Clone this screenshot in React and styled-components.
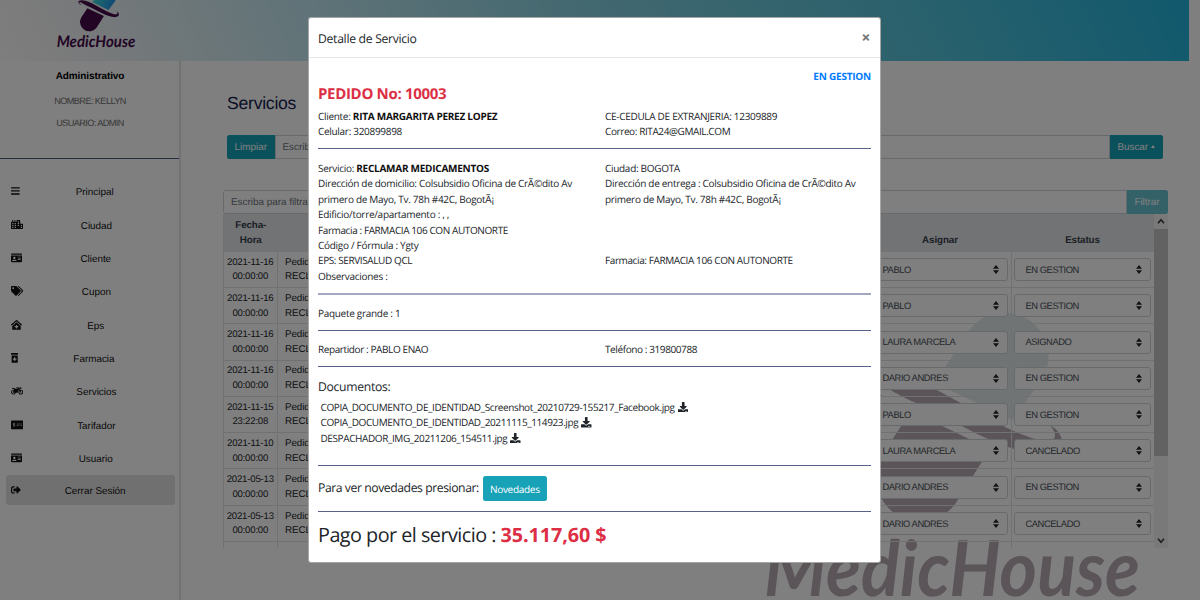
import React from "react";
import styled, { createGlobalStyle } from "styled-components";
import {
  FaBars, FaCity, FaIdCard, FaTags, FaClinicMedical, FaPrescriptionBottleAlt,
  FaMotorcycle, FaMoneyCheckAlt, FaSignOutAlt, FaDownload,
} from "react-icons/fa";

const Global = createGlobalStyle`
  *, *::before, *::after { box-sizing: border-box; }
  body {
    margin: 0;
    background: #fff;
    font-family: "Liberation Sans", Arial, sans-serif;
    font-size: 9.9px;
    color: #212529;
    overflow: hidden;
    text-rendering: geometricPrecision;
  }
`;

const Page = styled.div`
  position: relative;
  width: 1200px;
  height: 600px;
  overflow: hidden;
  background: #fff;
`;

const Banner = styled.header`
  width: 1189px;
  height: 61px;
  padding-left: 56px;
  background: linear-gradient(65deg, #fffcfc 0%, #f0f3f5 8%, #bee6f0 28%, #84d0e0 51%, #58c4da 75%, #22b2da 100%);
`;

const BannerLogo = styled.svg`
  display: block;
  width: 82px;
  height: 54px;
`;

const Columns = styled.div`
  display: flex;
  height: 539px;
`;

const Sidebar = styled.aside`
  width: 181px;
  border-right: 2px solid #e2e2e2;
  display: flex;
  flex-direction: column;
`;

const Profile = styled.div`
  height: 98px;
  padding-top: 8px;
  border-bottom: 1px solid #465a80;
  text-align: center;
`;

const Role = styled.div`
  font-size: 10px;
  line-height: 15px;
  font-weight: bold;
  color: #000;
  letter-spacing: -0.1px;
  padding-left: 1px;
`;

const ProfileLine = styled.div`
  margin-top: 10px;
  padding-left: 1px;
  font-size: 9.2px;
  line-height: 12px;
  letter-spacing: -0.6px;
  color: #707070;

  ${Role} + & { margin-top: 11px; }
`;

const Menu = styled.nav`
  display: flex;
  flex-direction: column;
  padding: 16px 0 0 6px;
`;

const MenuItem = styled.div`
  display: flex;
  align-items: center;
  width: 168.5px;
  height: ${(p) => (p.$active ? 30 : 33.37)}px;
  padding: 0 5px 0 5px;
  border-radius: 3px;
  background: ${(p) => (p.$active ? "#e1e1e1" : "transparent")};
  color: #101010;

  svg {
    display: block;
    flex: none;
    height: 9.8px;
    width: ${(p) => p.$icon}px;
    margin-top: -1px;
  }
  span { flex: 1; text-align: center; padding-top: ${(p) => (p.$active ? 3 : 2)}px; }
`;

const Main = styled.main`
  position: relative;
  flex: 1;
  padding: 30px 32px 0 42px;
`;

const Watermark = styled.svg`
  position: absolute;
  left: 579px;
  top: 239px;
  width: 400px;
  height: 300px;
`;

const Content = styled.div`
  position: relative;
`;

const Title = styled.h1`
  margin: 0 0 0 4px;
  height: 43.5px;
  font-size: 17.6px;
  line-height: 24px;
  font-weight: normal;
  letter-spacing: -0.25px;
  color: #14204f;
`;

const InputGroup = styled.div`
  display: flex;
  width: ${(p) => p.$width}px;
  height: 24.5px;
  margin: ${(p) => p.$margin};
  border-radius: 2.5px;
  overflow: hidden;
`;

const Field = styled.div`
  flex: 1;
  padding: 0 7px;
  border: 1px solid #ced4da;
  background: #fff;
  color: #6c757d;
  line-height: 24px;
  border-radius: ${(p) => (p.$first ? "2.5px 0 0 2.5px" : 0)};
`;

const Button = styled.div`
  display: flex;
  align-items: center;
  justify-content: center;
  gap: 3px;
  width: ${(p) => p.$width}px;
  padding-top: 1.5px;
  background: #17a2b8;
  color: #fff;
  opacity: ${(p) => (p.$disabled ? 0.65 : 1)};
`;

const CaretUp = styled.i`
  border: 2.6px solid transparent;
  border-top: 0;
  border-bottom: 3px solid #fff;
  margin-top: -2px;
`;

const Scroller = styled.div`
  display: flex;
  width: 944.5px;
  height: 333.5px;
  overflow: hidden;
`;

const Grid = styled.div`
  width: 930.5px;
  border-left: 1px solid #dee2e6;
`;

const GridRow = styled.div`
  display: grid;
  grid-template-columns: 53.5px 591px 143px 1fr;
  height: ${(p) => (p.$head ? 37.9 : 36.27)}px;
  background: ${(p) => (p.$head ? "#e3e7eb" : "transparent")};
  color: ${(p) => (p.$head ? "#39404a" : "#212529")};
  font-weight: ${(p) => (p.$head ? "bold" : "normal")};
  line-height: 14.7px;
`;

const Cell = styled.div`
  display: flex;
  flex-direction: column;
  justify-content: center;
  align-items: ${(p) => (p.$left ? "flex-start" : "center")};
  padding: ${(p) => (p.$left ? "1.7px 7.5px 0" : p.$low ? "16.5px 0 0" : p.$text ? "1.7px 1px 0" : "0 1px")};
  border-right: ${(p) => (p.$ruled ? "1px solid #dee2e6" : "0")};
  border-bottom: ${(p) => (p.$head ? "0" : "1px solid #dee2e6")};
  font-size: ${(p) => (p.$date ? 9.6 : 9.8)}px;
  letter-spacing: ${(p) => (p.$date ? -0.2 : -0.1)}px;
  white-space: nowrap;
`;

const Select = styled.div`
  display: flex;
  align-items: center;
  justify-content: space-between;
  width: 137px;
  height: 23px;
  padding: 0 8px 0 10.5px;
  border: 1px solid #ced4da;
  border-radius: 3px;
  background: #fff;
  color: #495057;
  font-size: 9.4px;
  letter-spacing: -0.45px;
  span { padding-top: 1px; }
  svg { width: 6px; height: 9px; fill: #212529; }
`;

const ScrollTrack = styled.div`
  display: flex;
  flex-direction: column;
  align-items: center;
  width: 14px;
  background: #f3f3f3;
  svg { width: 8px; height: 14.5px; stroke: #404040; stroke-width: 1.7; fill: none; flex: none; }
`;

const Thumb = styled.div`
  width: 14px;
  height: 227px;
  margin-bottom: auto;
  background: #c4c4c4;
`;

const Backdrop = styled.div`
  position: absolute;
  inset: 0;
  background: rgba(0, 0, 0, 0.5);
`;

const Modal = styled.section`
  width: 573px;
  height: 546px;
  margin: 17px 0 0 308px;
  border: 1px solid rgba(0, 0, 0, 0.35);
  border-radius: 3px;
  background: #fff;
  font-family: "Open Sans", "Noto Sans", sans-serif;
  font-size: 10px;
  line-height: 15.43px;
  letter-spacing: -0.3px;
  color: #212529;
`;

const ModalHeader = styled.div`
  display: flex;
  justify-content: space-between;
  height: 40px;
  padding: 10px 10px 0 9px;
  border-bottom: 1px solid #e6e9ec;
`;

const Heading = styled.div`
  font-size: 12.2px;
  line-height: ${(p) => p.$line || 22}px;
  letter-spacing: ${(p) => (p.$tight ? -0.43 : -0.3)}px;
`;

const Close = styled.div`
  font-size: 15.5px;
  line-height: 19px;
  font-weight: bold;
  color: #777;
`;

const ModalBody = styled.div`
  padding: 11px 9px 0;
`;

const Status = styled.div`
  text-align: right;
  font-size: 10px;
  line-height: 15px;
  font-weight: bold;
  letter-spacing: -0.22px;
  color: #007bff;
`;

const OrderNumber = styled.div`
  height: 24.7px;
  font-size: 15px;
  line-height: 20px;
  font-weight: bold;
  letter-spacing: -0.32px;
  color: #dc2f45;
`;

const Pair = styled.div`
  display: grid;
  grid-template-columns: 287px 1fr;
  white-space: nowrap;
  b { color: #101010; letter-spacing: -0.26px; }
`;

const Caps = styled.span`
  letter-spacing: -0.4px;
`;

const Rule = styled.hr`
  height: ${(p) => (p.$soft ? 2 : 1)}px;
  margin: ${(p) => p.$margin};
  border: 0;
  background: ${(p) => (p.$soft ? "#a3a8c0" : "#56618a")};
`;

const Files = styled.div`
  padding: 3px 0 0 2.5px;
  letter-spacing: -0.4px;
`;

const FileLine = styled.div`
  display: flex;
  align-items: center;
  gap: 3px;
  height: 15.43px;
  svg { width: 10.5px; height: 10.5px; margin-top: -1px; }
`;

const News = styled.div`
  display: flex;
  align-items: flex-start;
  gap: 4px;
  height: 25px;
`;

const NewsButton = styled.div`
  width: 64px;
  height: 25px;
  border-radius: 2.5px;
  background: #17a2b8;
  color: #fff;
  text-align: center;
  line-height: 26px;
`;

const Total = styled.div`
  font-size: 19.8px;
  line-height: 28px;
  letter-spacing: -0.52px;
  b { color: #dc2f45; letter-spacing: -0.08px; }
`;

function HatLogo({ brand, pill }) {
  return (
    <>
      <path fill={pill} d="M935 383 L968.8 330.8 A44 44 0 0 1 1042.2 379.2 L1012 420 Z" />
      <path fill={brand} d="M911 411 L990 449 L955.7 503.2 A44 44 0 0 1 882.3 454.8 Z" />
      <path fill={brand} d="M885 398 C862 386 863 374 884 373 C924 372 984 424 1035 439 C1053 444 1061 439 1050 425 C1068 436 1065 453 1044 454 C1002 454 950 417 914 402 C893 393 878 381 874 382 C870 384 876 391 885 398 Z" />
      <text
        x="764" y="596" textLength="376" lengthAdjust="spacingAndGlyphs"
        fill={brand} fontFamily="Lato, sans-serif" fontWeight="bold" fontStyle="italic" fontSize="77"
      >
        MedicHouse
      </text>
    </>
  );
}

const menu = [
  ["Principal", FaBars, 8.8],
  ["Ciudad", FaCity, 12.3],
  ["Cliente", FaIdCard, 11],
  ["Cupon", FaTags, 12.3],
  ["Eps", FaClinicMedical, 11],
  ["Farmacia", FaPrescriptionBottleAlt, 7.4],
  ["Servicios", FaMotorcycle, 12.3],
  ["Tarifador", FaMoneyCheckAlt, 12.3],
  ["Usuario", FaIdCard, 11],
  ["Cerrar Sesión", FaSignOutAlt, 9.8],
];

const orders = [
  ["2021-11-16", "00:00:00", "PABLO", "EN GESTION"],
  ["2021-11-16", "00:00:00", "PABLO", "EN GESTION"],
  ["2021-11-16", "00:00:00", "LAURA MARCELA", "ASIGNADO"],
  ["2021-11-16", "00:00:00", "DARIO ANDRES", "EN GESTION"],
  ["2021-11-15", "23:22:08", "PABLO", "EN GESTION"],
  ["2021-11-10", "00:00:00", "LAURA MARCELA", "CANCELADO"],
  ["2021-05-13", "00:00:00", "DARIO ANDRES", "EN GESTION"],
  ["2021-05-13", "00:00:00", "DARIO ANDRES", "CANCELADO"],
];

const files = [
  "COPIA_DOCUMENTO_DE_IDENTIDAD_Screenshot_20210729-155217_Facebook.jpg",
  "COPIA_DOCUMENTO_DE_IDENTIDAD_20211115_114923.jpg",
  "DESPACHADOR_IMG_20211206_154511.jpg",
];

function Picker({ children }) {
  return (
    <Select>
      <span>{children}</span>
      <svg viewBox="0 0 6 9"><path d="M3 0 L6 3.8 H0 Z M0 5.2 H6 L3 9 Z" /></svg>
    </Select>
  );
}

export default function App() {
  return (
    <Page>
      <Global />
      <Banner>
        <BannerLogo viewBox="761 372 392 258">
          <defs>
            <linearGradient id="pill" x1="0" y1="0.2" x2="1" y2="0.6">
              <stop offset="0.1" stopColor="#45e0d8" />
              <stop offset="1" stopColor="#1f8fe8" />
            </linearGradient>
          </defs>
          <HatLogo brand="#44084a" pill="url(#pill)" />
        </BannerLogo>
      </Banner>
      <Columns>
        <Sidebar>
          <Profile>
            <Role>Administrativo</Role>
            <ProfileLine>NOMBRE: KELLYN</ProfileLine>
            <ProfileLine>USUARIO: ADMIN</ProfileLine>
          </Profile>
          <Menu>
            {menu.map(([label, Icon, width], i) => (
              <MenuItem key={label} $icon={width} $active={i === menu.length - 1}>
                <Icon />
                <span>{label}</span>
              </MenuItem>
            ))}
          </Menu>
        </Sidebar>
        <Main>
          <Watermark viewBox="760 300 400 300">
            <HatLogo brand="#b6a8b0" pill="#e1e9e9" />
          </Watermark>
          <Content>
            <Title>Servicios</Title>
            <InputGroup $width={936} $margin="0 0 30.5px 4px">
              <Button $width={47.5}>Limpiar</Button>
              <Field>Escriba para buscar</Field>
              <Button $width={53.5}>Buscar<CaretUp /></Button>
            </InputGroup>
            <InputGroup $width={944.5} $margin="0">
              <Field $first>Escriba para filtrar</Field>
              <Button $width={41} $disabled>Filtrar</Button>
            </InputGroup>
            <Scroller>
              <Grid>
                <GridRow $head>
                  <Cell $head $text><span>Fecha-</span><span>Hora</span></Cell>
                  <Cell $head />
                  <Cell $head $low>Asignar</Cell>
                  <Cell $head $low>Estatus</Cell>
                </GridRow>
                {orders.map(([date, time, courier, state], i) => (
                  <GridRow key={i}>
                    <Cell $date $text $ruled><span>{date}</span><span>{time}</span></Cell>
                    <Cell $left><span>Pedido</span><span>RECLAMAR</span></Cell>
                    <Cell $ruled><Picker>{courier}</Picker></Cell>
                    <Cell><Picker>{state}</Picker></Cell>
                  </GridRow>
                ))}
                <GridRow>
                  <Cell $ruled />
                  <Cell />
                  <Cell $ruled />
                  <Cell />
                </GridRow>
              </Grid>
              <ScrollTrack>
                <svg viewBox="0 0 8 14"><path d="M1 9 L4 5.5 L7 9" /></svg>
                <Thumb />
                <svg viewBox="0 0 8 14"><path d="M1 5.5 L4 9 L7 5.5" /></svg>
              </ScrollTrack>
            </Scroller>
          </Content>
        </Main>
      </Columns>
      <Backdrop>
        <Modal>
          <ModalHeader>
            <Heading>Detalle de Servicio</Heading>
            <Close>×</Close>
          </ModalHeader>
          <ModalBody>
            <Status>EN GESTION</Status>
            <OrderNumber>PEDIDO No: 10003</OrderNumber>
            <Pair>
              <span>Cliente: <b>RITA MARGARITA PEREZ LOPEZ</b></span>
              <span>CE-CEDULA DE EXTRANJERIA: 12309889</span>
              <span>Celular: 320899898</span>
              <Caps>Correo: RITA24@GMAIL.COM</Caps>
            </Pair>
            <Rule $margin="8.3px 0 12px" />
            <Pair>
              <span>Servicio: <b>RECLAMAR MEDICAMENTOS</b></span>
              <span>Ciudad: BOGOTA</span>
              <span>Dirección de domicilio: Colsubsidio Oficina de CrÃ©dito Av</span>
              <span>Dirección de entrega : Colsubsidio Oficina de CrÃ©dito Av</span>
              <span>primero de Mayo, Tv. 78h #42C, BogotÃ¡</span>
              <span>primero de Mayo, Tv. 78h #42C, BogotÃ¡</span>
              <span>Edificio/torre/apartamento : , ,</span>
              <span />
              <Caps>Farmacia : FARMACIA 106 CON AUTONORTE</Caps>
              <span />
              <span>Código / Fórmula : Ygty</span>
              <span />
              <Caps>EPS: SERVISALUD QCL</Caps>
              <Caps>Farmacia: FARMACIA 106 CON AUTONORTE</Caps>
              <span>Observaciones :</span>
            </Pair>
            <Rule $soft $margin="8.5px 0 11px" />
            <Pair><span>Paquete grande : 1</span></Pair>
            <Rule $margin="8.5px 0 11.3px" />
            <Pair>
              <Caps>Repartidor : PABLO ENAO</Caps>
              <Caps>Teléfono : 319800788</Caps>
            </Pair>
            <Rule $margin="8.7px 0 9.5px" />
            <Heading $line={20}>Documentos:</Heading>
            <Files>
              {files.map((name) => (
                <FileLine key={name}>{name}<FaDownload /></FileLine>
              ))}
            </Files>
            <Rule $margin="19px 0 10px" />
            <News>
              <Heading $tight $line={23}>Para ver novedades presionar:</Heading>
              <NewsButton>Novedades</NewsButton>
            </News>
            <Rule $margin="10px 0 9px" />
            <Total>Pago por el servicio : <b>35.117,60 $</b></Total>
          </ModalBody>
        </Modal>
      </Backdrop>
    </Page>
  );
}
